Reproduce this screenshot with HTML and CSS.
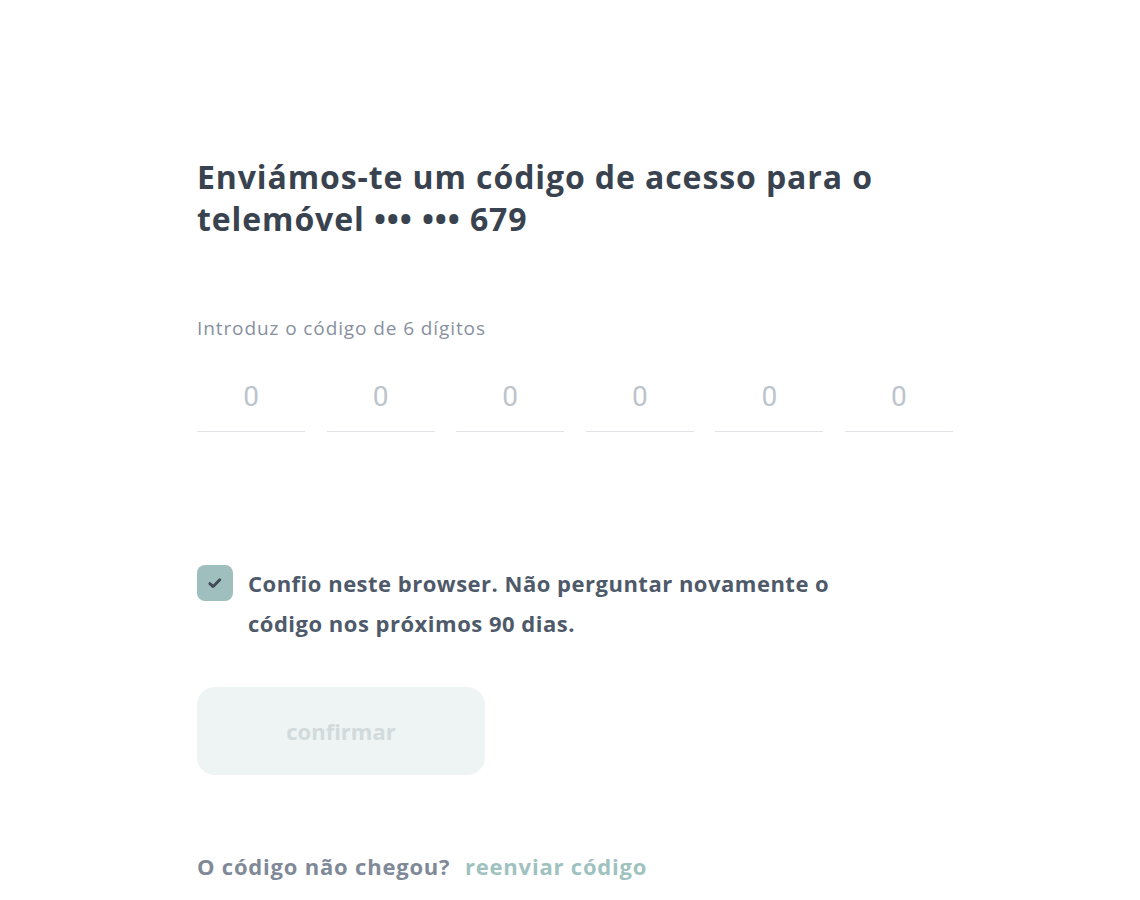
FILE: index.html
```html
<!DOCTYPE html>
<html lang="pt">
<head>
<meta charset="utf-8">
<title>Código de acesso</title>
<link rel="stylesheet" href="styles.css">
</head>
<body>
<main class="page">
  <h1 class="title">Enviámos-te um código de acesso para o telemóvel ••• ••• 679</h1>
  <p class="label">Introduz o código de 6 dígitos</p>
  <div class="code">
    <input class="digit" type="text" maxlength="1" placeholder="0">
    <input class="digit" type="text" maxlength="1" placeholder="0">
    <input class="digit" type="text" maxlength="1" placeholder="0">
    <input class="digit" type="text" maxlength="1" placeholder="0">
    <input class="digit" type="text" maxlength="1" placeholder="0">
    <input class="digit" type="text" maxlength="1" placeholder="0">
  </div>
  <label class="trust">
    <span class="box">
      <svg viewBox="0 0 18 18" width="18" height="18"><path d="M3.8 9.6 L7.2 12.6 L13.8 5.8" fill="none" stroke="#3f4a57" stroke-width="2.8" stroke-linecap="round" stroke-linejoin="round"/></svg>
    </span>
    <span class="trust-text">Confio neste browser. Não perguntar novamente o código nos próximos 90 dias.</span>
  </label>
  <button class="confirm" type="button">confirmar</button>
  <p class="resend">O código não chegou? <a class="resend-link" href="#">reenviar código</a></p>
</main>
</body>
</html>
```
FILE: styles.css
```css
html, body {
  margin: 0;
  padding: 0;
  background: #ffffff;
}
body {
  font-family: "Open Sans", Lato, sans-serif;
}
.page {
  width: 800px;
  padding: 156px 0 0 197px;
  display: flex;
  flex-direction: column;
  align-items: flex-start;
}
.title {
  margin: 0;
  width: 720px;
  font-size: 32px;
  line-height: 42px;
  font-weight: 700;
  letter-spacing: 0.9px;
  color: #39434f;
}
.label {
  margin: 75px 0 0;
  font-size: 19px;
  line-height: 26px;
  letter-spacing: 0.9px;
  color: #8790a0;
}
.code {
  margin-top: 28px;
  display: grid;
  grid-template-columns: repeat(6, 108px);
  column-gap: 21.6px;
}
.digit {
  box-sizing: border-box;
  width: 108px;
  height: 63px;
  border: 0;
  border-bottom: 1px solid #e1e4e7;
  padding: 0 0 7px;
  text-align: center;
  font-family: Roboto, "Liberation Sans", sans-serif;
  font-size: 28px;
  color: #39434f;
  background: transparent;
  outline: none;
}
.digit::placeholder {
  color: #bcc4cc;
}
.trust {
  margin-top: 133px;
  display: flex;
  align-items: flex-start;
  gap: 15px;
  width: 660px;
}
.box {
  flex: none;
  width: 36px;
  height: 36px;
  border-radius: 8px;
  background: #9fbfbf;
  display: flex;
  align-items: center;
  justify-content: center;
}
.trust-text {
  font-size: 22px;
  line-height: 40px;
  margin-top: -2px;
  font-weight: 700;
  letter-spacing: 0.5px;
  color: #4e5a6a;
}
.confirm {
  margin-top: 44px;
  width: 288px;
  height: 88px;
  border: 0;
  border-radius: 18px;
  background: #edf4f3;
  color: #d2dadc;
  font-family: inherit;
  font-size: 22px;
  font-weight: 700;
}
.resend {
  margin: 76px 0 0;
  font-size: 22px;
  line-height: 30px;
  font-weight: 700;
  letter-spacing: 0.8px;
  color: #7f8998;
}
.resend-link {
  margin-left: 8px;
  color: #9fc2bf;
  text-decoration: none;
}
```
